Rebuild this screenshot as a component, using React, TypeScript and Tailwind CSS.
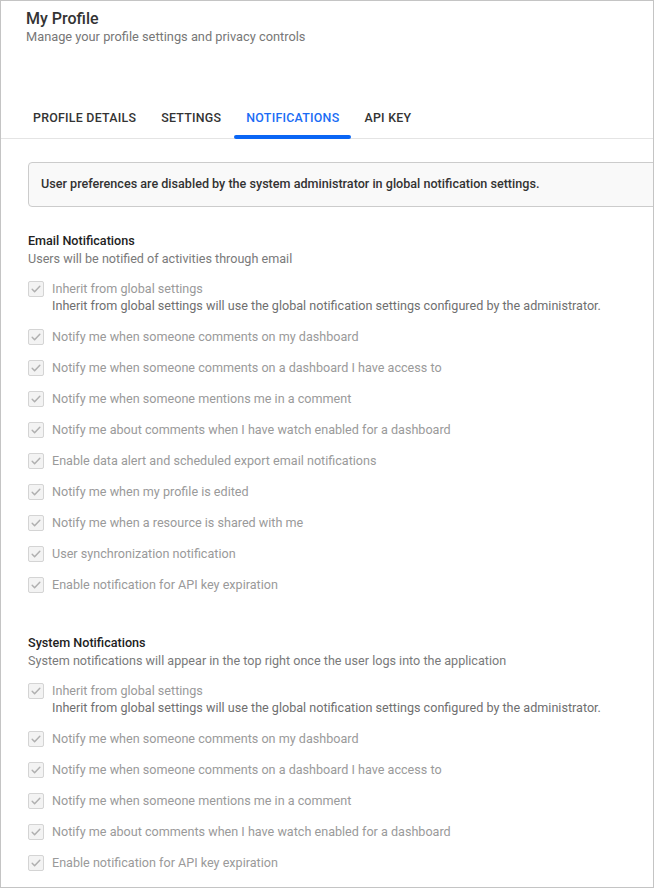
import React from 'react';

const tabs = ['Profile Details', 'Settings', 'Notifications', 'API Key'];

const emailItems = [
  'Notify me when someone comments on my dashboard',
  'Notify me when someone comments on a dashboard I have access to',
  'Notify me when someone mentions me in a comment',
  'Notify me about comments when I have watch enabled for a dashboard',
  'Enable data alert and scheduled export email notifications',
  'Notify me when my profile is edited',
  'Notify me when a resource is shared with me',
  'User synchronization notification',
  'Enable notification for API key expiration',
];

const systemItems = [
  'Notify me when someone comments on my dashboard',
  'Notify me when someone comments on a dashboard I have access to',
  'Notify me when someone mentions me in a comment',
  'Notify me about comments when I have watch enabled for a dashboard',
  'Enable notification for API key expiration',
];

// 禁用状态的复选框
const Checkbox: React.FC = () => (
  <span className="mt-px flex h-4 w-4 shrink-0 items-center justify-center rounded-[2px] border border-[#d4d4d4] bg-[#f3f3f3]">
    <svg width="12" height="12" viewBox="0 0 12 12" fill="none">
      <path d="M2.2 6.3l2.4 2.4 5.2-5.4" stroke="#b0b0b0" strokeWidth="1.5" strokeLinecap="round" strokeLinejoin="round" />
    </svg>
  </span>
);

const Row: React.FC<{ label: string; sub?: string }> = ({ label, sub }) => (
  <div className="flex items-start gap-2 leading-[17px]">
    <Checkbox />
    <div className="flex flex-col">
      <span className="text-[#9a9a9a]">{label}</span>
      {sub && <span className="text-[#6f6f6f]">{sub}</span>}
    </div>
  </div>
);

const Section: React.FC<{ title: string; desc: string; items: string[] }> = ({ title, desc, items }) => (
  <div className="flex flex-col">
    <div className="font-medium leading-[18px] text-[#222]">{title}</div>
    <div className="leading-[18px] text-[#7a7a7a]">{desc}</div>
    <div className="mt-[12px] flex flex-col gap-[14px]">
      <Row
        label="Inherit from global settings"
        sub="Inherit from global settings will use the global notification settings configured by the administrator."
      />
      {items.map((item) => (
        <Row key={item} label={item} />
      ))}
    </div>
  </div>
);

export default function App() {
  return (
    <div
      className="h-[888px] w-[654px] overflow-hidden border border-[#c4c4c4] bg-white text-[12.6px]"
      style={{ fontFamily: 'Roboto, "Liberation Sans", sans-serif' }}
    >
      <div className="pl-[25px] pt-[8px]">
        <h1 className="text-[16px] font-medium leading-[20px] text-[#333]">My Profile</h1>
        <p className="text-[12.8px] leading-[16px] text-[#777]">Manage your profile settings and privacy controls</p>
      </div>

      <div className="mt-[53px] flex border-b border-[#e4e4e4] pl-[20px]">
        {tabs.map((tab) => {
          const active = tab === 'Notifications';
          return (
            <div
              key={tab}
              className={`relative mr-px flex h-10 items-center px-3 text-[12.4px] font-medium uppercase tracking-[0.25px] ${
                active ? 'text-[#1a6cf5]' : 'text-[#333]'
              }`}
            >
              {tab}
              {active && <span className="absolute bottom-[-1px] left-0 right-0 h-[4px] rounded-full bg-[#0a66f5]" />}
            </div>
          );
        })}
      </div>

      <div className="pl-[27px]">
        <div className="mt-[23px] flex h-[45px] w-[660px] items-center rounded-[4px] border border-[#cccccc] bg-[#f9f9f9] pl-[12px] text-[12.6px] font-medium text-[#333]">
          User preferences are disabled by the system administrator in global notification settings.
        </div>

        <div className="mt-[25px]">
          <Section title="Email Notifications" desc="Users will be notified of activities through email" items={emailItems} />
        </div>
        <div className="mt-[41px]">
          <Section
            title="System Notifications"
            desc="System notifications will appear in the top right once the user logs into the application"
            items={systemItems}
          />
        </div>
      </div>
    </div>
  );
}
